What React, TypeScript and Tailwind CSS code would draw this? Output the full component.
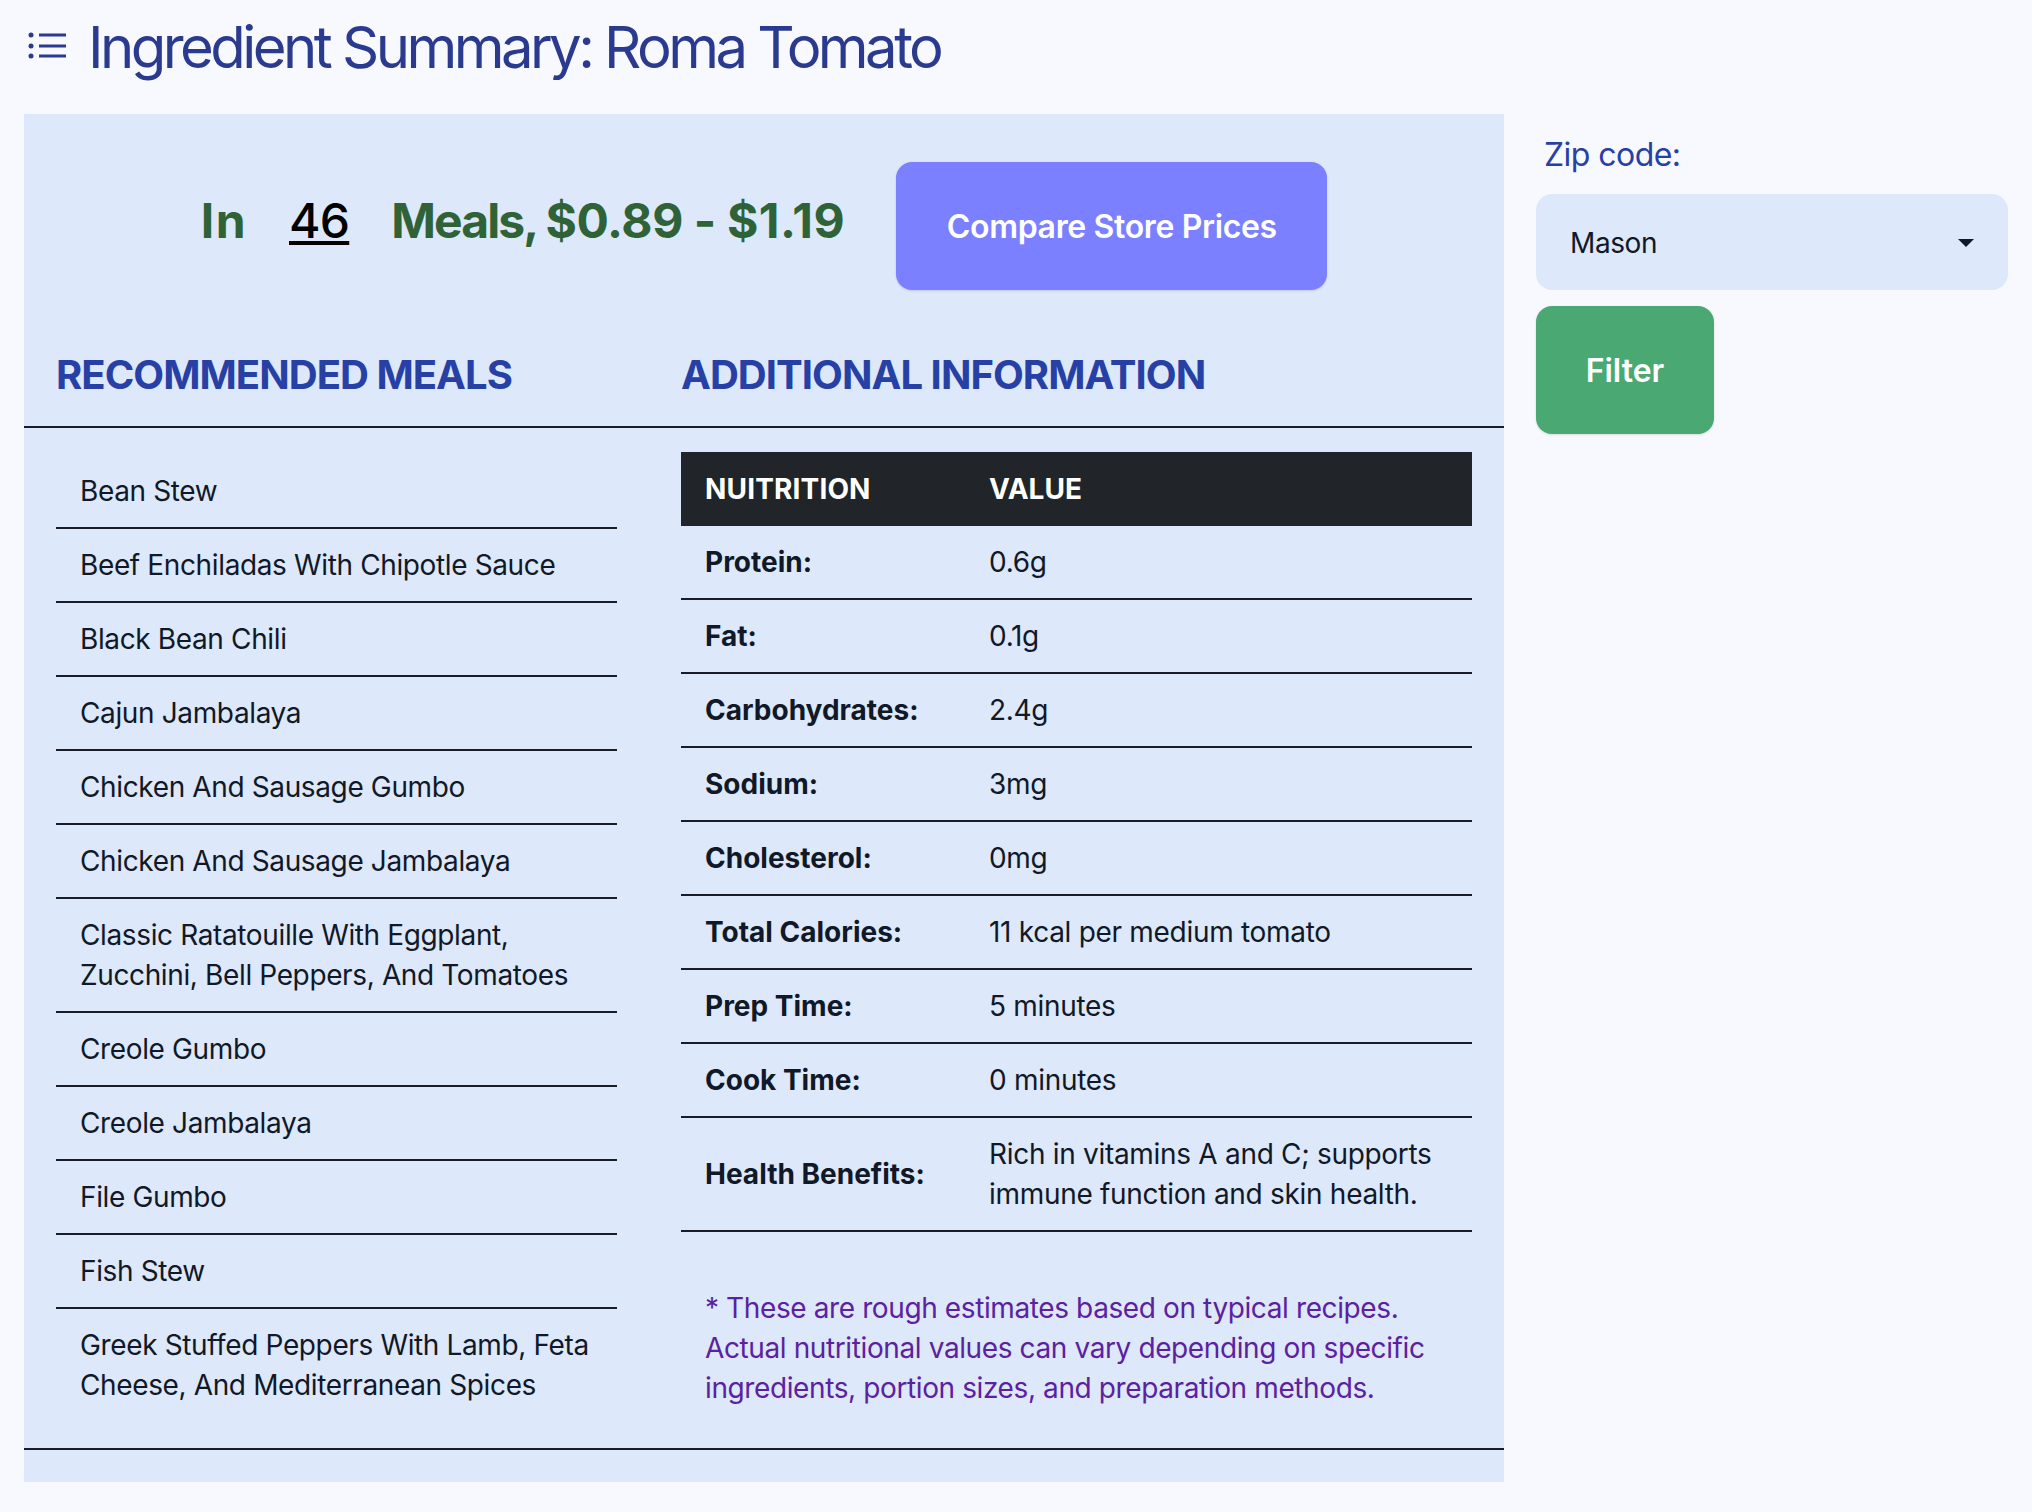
const meals = [
  'Bean Stew',
  'Beef Enchiladas With Chipotle Sauce',
  'Black Bean Chili',
  'Cajun Jambalaya',
  'Chicken And Sausage Gumbo',
  'Chicken And Sausage Jambalaya',
  'Classic Ratatouille With Eggplant, Zucchini, Bell Peppers, And Tomatoes',
  'Creole Gumbo',
  'Creole Jambalaya',
  'File Gumbo',
  'Fish Stew',
  'Greek Stuffed Peppers With Lamb, Feta Cheese, And Mediterranean Spices',
]

const nutrition = [
  ['Protein:', '0.6g'],
  ['Fat:', '0.1g'],
  ['Carbohydrates:', '2.4g'],
  ['Sodium:', '3mg'],
  ['Cholesterol:', '0mg'],
  ['Total Calories:', '11 kcal per medium tomato'],
  ['Prep Time:', '5 minutes'],
  ['Cook Time:', '0 minutes'],
  ['Health Benefits:', 'Rich in vitamins A and C; supports immune function and skin health.'],
]

function ListIcon() {
  return (
    <svg width="40" height="30" viewBox="0 0 40 30" fill="none" className="shrink-0 text-[#2a3b8f]">
      <path d="M11 3h27M11 14h27M11 24h27" stroke="currentColor" strokeWidth="3" />
      <circle cx="3" cy="3" r="2.5" fill="currentColor" />
      <circle cx="3" cy="14" r="2.5" fill="currentColor" />
      <circle cx="3" cy="24" r="2.5" fill="currentColor" />
    </svg>
  )
}

export default function App() {
  return (
    <div className="flex min-h-[1512px] bg-[#f8f8ff] font-['Inter',sans-serif] text-[#111827]">
      <div className="ml-6 w-[1480px]">
        {/* Page title */}
        <div className="flex h-[114px] items-center gap-[20px] pb-[20px] pl-1">
          <ListIcon />
          <h1 className="text-[58px] leading-[72px] tracking-[-3.55px] text-[#2a3b8f]">Ingredient Summary: Roma Tomato</h1>
        </div>

        <div className="h-[1368px] bg-[#dde8fa]">
          {/* Count and prices */}
          <div className="flex items-center justify-center gap-[51px] pt-12">
            <div className="flex gap-[42px] pb-[10px] text-[48px] font-bold leading-[118px] tracking-[-0.4px] text-[#2f6337]">
              <span className="tracking-[1.5px]">In</span>
              <span className="font-medium tracking-[-0.75px] text-black underline">46</span>
              <span>
                <span className="tracking-[-1.9px]">Meals, </span>$0.89 - <span className="tracking-[0.55px]">$1.19</span>
              </span>
            </div>
            <button className="flex h-32 w-[431px] items-center justify-center rounded-2xl bg-[#7a80ff] pt-[2px] text-[32px] font-semibold tracking-[-0.35px] text-white shadow-sm">
              Compare Store Prices
            </button>
          </div>

          {/* Section headings */}
          <div className="mt-[50px] flex h-[88px] gap-16 border-b-2 border-[#1a1d26] px-8 pt-[5px] text-[40px] font-bold tracking-[-0.95px] text-[#2740a6]">
            <h2 className="w-[561px] leading-[60px]">RECOMMENDED MEALS</h2>
            <h2 className="leading-[60px]">ADDITIONAL INFORMATION</h2>
          </div>

          <div className="flex h-[1022px] gap-16 border-b-2 border-[#1a1d26] px-8 pt-6">
            <ul className="w-[561px] pt-[3px] text-[28px] leading-10 tracking-[-0.37px]">
              {meals.map((meal) => (
                <li key={meal} className="border-b-2 border-[#1a1d26] px-6 py-[16px] last:border-b-0">
                  {meal}
                </li>
              ))}
            </ul>

            <div className="w-[791px]">
              <table className="w-full border-collapse text-[28px] leading-10">
                <thead>
                  <tr className="h-[74px] bg-[#212529] text-left font-bold text-white">
                    <th className="w-[284px] px-6 tracking-[0.15px]">NUITRITION</th>
                    <th className="px-6">VALUE</th>
                  </tr>
                </thead>
                <tbody>
                  {nutrition.map(([label, value]) => (
                    <tr key={label} className="border-b-2 border-[#1a1d26]">
                      <td className="px-6 py-[16px] font-bold">{label}</td>
                      <td className="px-6 py-[16px] tracking-[-0.3px]">{value}</td>
                    </tr>
                  ))}
                </tbody>
              </table>
              <p className="mt-[56px] px-6 text-[28px] leading-10 tracking-[-0.39px] text-[#5b21a0]">
                * These are rough estimates based on typical recipes. Actual nutritional values can vary depending on specific ingredients, portion sizes, and preparation methods.
              </p>
            </div>
          </div>
        </div>
      </div>

      {/* Filter column */}
      <div className="ml-8 w-[472px] pt-[134px]">
        <label className="block pl-2 pt-[2px] text-[32px] leading-[38px] tracking-[-0.55px] text-[#2740a6]">Zip code:</label>
        <button className="mt-5 flex h-24 w-full items-center justify-between rounded-2xl bg-[#dde8fa] pl-[34px] pr-[34px] pt-[2px] text-[28px] tracking-[-0.4px]">
          Mason
          <svg width="16" height="8" viewBox="0 0 16 8" className="text-[#111827]">
            <path d="M0 0h16L8 8z" fill="currentColor" />
          </svg>
        </button>
        <button className="mt-4 h-32 w-[178px] rounded-2xl bg-[#4aa873] pt-[2px] text-[32px] font-semibold text-white shadow-sm">
          Filter
        </button>
      </div>
    </div>
  )
}
